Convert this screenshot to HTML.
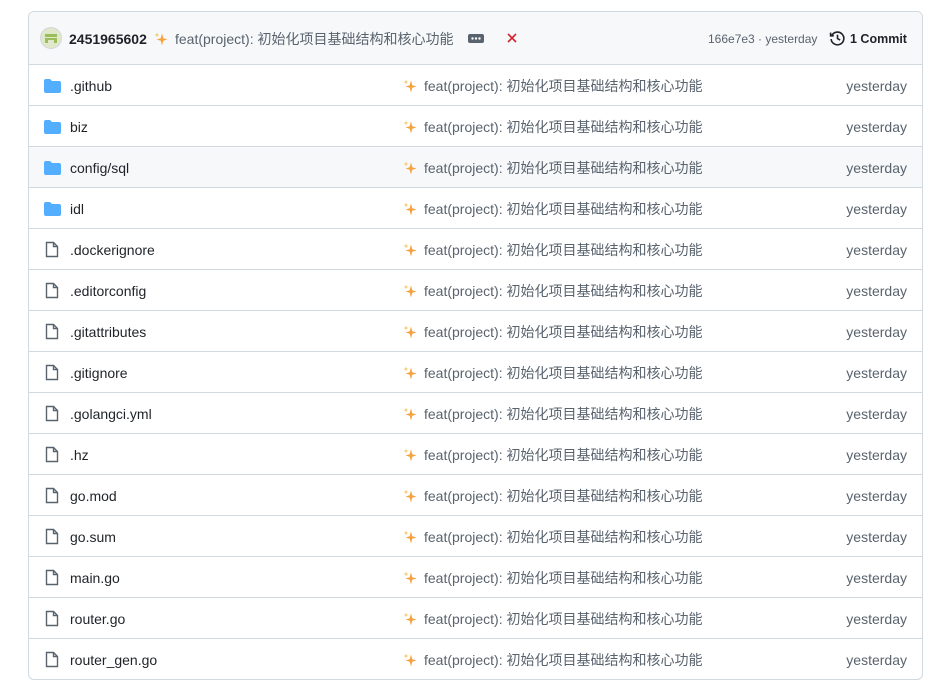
<!DOCTYPE html>
<html><head><meta charset="utf-8"><style>
body{margin:0;background:#fff;font-family:"Liberation Sans","Noto Sans CJK SC",sans-serif;font-size:14px;color:#1f2328;}
.box{position:absolute;left:28px;top:11px;width:893px;height:667px;border:1px solid #d1d9e0;border-radius:6px;overflow:hidden;}
.hdr{height:52px;background:#f6f8fa;border-bottom:1px solid #d1d9e0;position:relative;}
.row{height:40px;border-bottom:1px solid #d1d9e0;position:relative;}
.row:last-child{border-bottom:none}
.row.h{background:#f6f8fa}
.abs{position:absolute;white-space:nowrap;line-height:16px}
.name{left:41px;top:13px;color:#1f2328}
.msg{left:374px;top:13px;color:#59636e}
.date{right:15px;top:13px;color:#59636e}
.sp{display:inline-block;width:14px;height:14px;vertical-align:-2px;margin-right:7px}
</style></head><body>
<svg width="0" height="0" style="position:absolute"><defs><symbol id="spk" viewBox="0 0 14 14"><path d="M8 1.5L9.3 6.2 13.5 7.5 9.3 8.8 8 13.5 6.7 8.8 2.5 7.5 6.7 6.2z" fill="#f4a340"/><path d="M3 0.5L3.6 2.4 5.5 3 3.6 3.6 3 5.5 2.4 3.6 0.5 3 2.4 2.4z" fill="#f7c460"/></symbol></defs></svg>
<div class="box">
<div class="hdr">
<svg class="abs" style="left:11px;top:15px" width="22" height="22" viewBox="0 0 22 22"><circle cx="11" cy="11" r="10.5" fill="#dfe8c9" stroke="#d0d7de"/><rect x="5" y="7" width="12" height="3" fill="#9bbd5a"/><rect x="5" y="11" width="3" height="5" fill="#9bbd5a"/><rect x="14" y="11" width="3" height="5" fill="#9bbd5a"/><rect x="8" y="11" width="6" height="2" fill="#9bbd5a"/></svg>
<span class="abs" style="left:40px;top:19px;font-weight:bold">2451965602</span>
<span class="abs" style="left:125px;top:19px;color:#59636e"><svg class="sp"><use href="#spk"/></svg>feat(project): 初始化项目基础结构和核心功能</span>
<svg class="abs" style="left:439px;top:22px" width="16" height="9"><rect width="16" height="9" rx="2" fill="#59636e"/><circle cx="4.5" cy="4.5" r="1.2" fill="#fff"/><circle cx="8" cy="4.5" r="1.2" fill="#fff"/><circle cx="11.5" cy="4.5" r="1.2" fill="#fff"/></svg>
<svg class="abs" style="left:478px;top:21px" width="10" height="10" stroke="#d1242f" stroke-width="1.6"><path d="M1 1l8 8M9 1l-8 8"/></svg>
<span class="abs" style="left:679px;top:19px;color:#59636e;font-size:12px">166e7e3 · yesterday</span>
<svg class="abs" style="left:800px;top:18px" width="17" height="17" viewBox="0 0 16 16" fill="none" stroke="#1f2328" stroke-width="1.5"><path d="M2.5 5.5A6 6 0 1 1 2 8.5"/><path d="M1.5 2.5v3h3"/><path d="M8 4.5V8l2.5 1.5"/></svg>
<span class="abs" style="left:821px;top:19px;font-weight:bold;font-size:12.5px">1 Commit</span>
</div>
<div id="rows"></div>
</div>
<script>
var f=[[".github",1],["biz",1],["config/sql",1],["idl",1],[".dockerignore"],[".editorconfig"],[".gitattributes"],[".gitignore"],[".golangci.yml"],[".hz"],["go.mod"],["go.sum"],["main.go"],["router.go"],["router_gen.go"]];
var h="";f.forEach(function(r,i){
var ic=r[1]?'<svg class="abs" style="left:15px;top:14px" width="17" height="14" viewBox="0 0 17 14"><path d="M0 2a2 2 0 0 1 2-2h4l2 2h7a2 2 0 0 1 2 2v8a2 2 0 0 1-2 2H2a2 2 0 0 1-2-2z" fill="#54aeff"/></svg>':'<svg class="abs" style="left:16px;top:12px" width="14" height="17" viewBox="0 0 14 17" fill="none" stroke="#59636e" stroke-width="1.4"><path d="M1.5 1.5h7l4 4v10h-11z"/><path d="M8.5 1.5v4h4"/></svg>';
h+='<div class="row'+(i==2?' h':'')+'">'+ic+'<span class="abs name">'+r[0]+'</span><span class="abs msg"><svg class="sp"><use href="#spk"/></svg>feat(project): 初始化项目基础结构和核心功能</span><span class="abs date">yesterday</span></div>';});
document.getElementById("rows").innerHTML=h;
</script>
</body></html>
